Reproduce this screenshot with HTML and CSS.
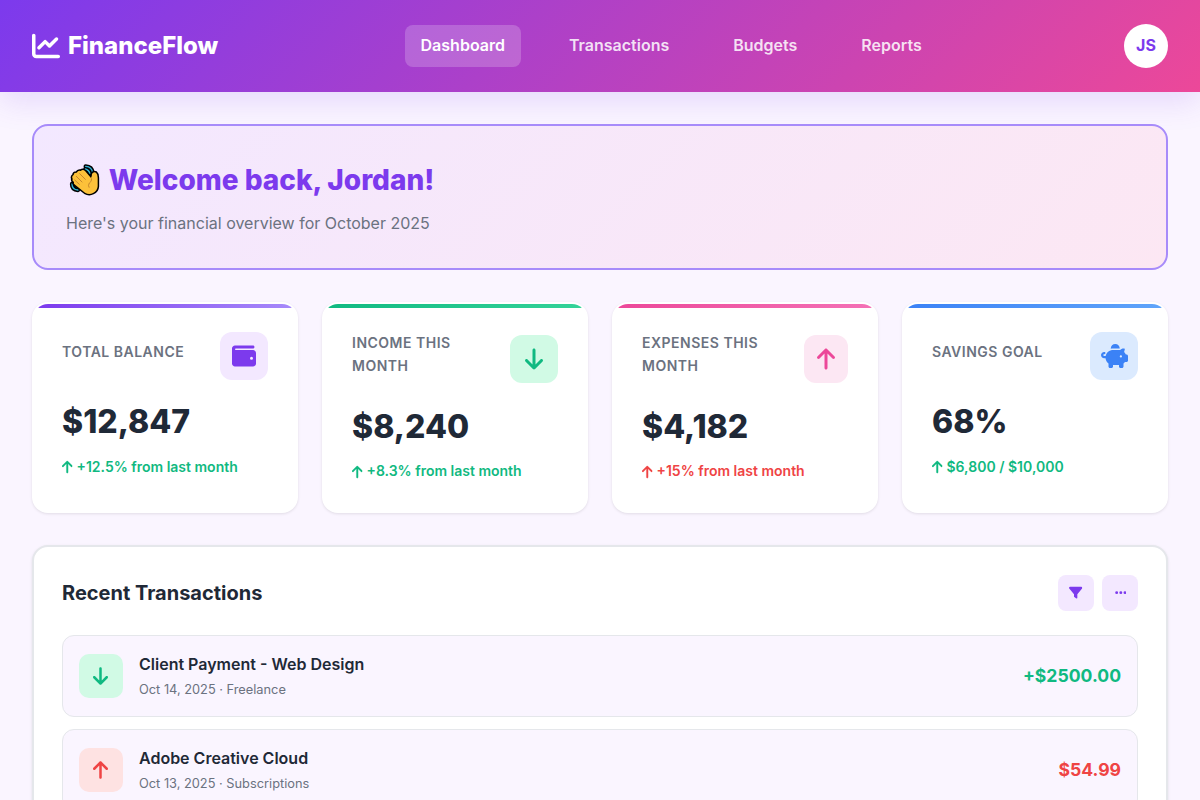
FILE: index.html
```html
<!DOCTYPE html>
<html lang="en">
<head>
<meta charset="utf-8">
<title>FinanceFlow</title>
<link rel="stylesheet" href="styles.css">
</head>
<body>
<svg class="sprite" aria-hidden="true">
  <symbol id="chart-line" viewBox="0 0 512 512"><path d="M64 64c0-17.7-14.3-32-32-32S0 46.3 0 64V400c0 44.2 35.8 80 80 80H480c17.7 0 32-14.3 32-32s-14.3-32-32-32H80c-8.8 0-16-7.2-16-16V64zm406.6 86.6c12.5-12.5 12.5-32.8 0-45.3s-32.8-12.5-45.3 0L320 210.7l-57.4-57.4c-12.5-12.5-32.8-12.5-45.3 0l-112 112c-12.5 12.5-12.5 32.8 0 45.3s32.8 12.5 45.3 0L240 221.3l57.4 57.4c12.5 12.5 32.8 12.5 45.3 0l128-128z"/></symbol>
  <symbol id="wallet" viewBox="0 0 512 512"><path d="M64 32C28.7 32 0 60.7 0 96V416c0 35.3 28.7 64 64 64H448c35.3 0 64-28.7 64-64V192c0-35.3-28.7-64-64-64H80c-8.8 0-16-7.2-16-16s7.2-16 16-16H448c17.7 0 32-14.3 32-32s-14.3-32-32-32H64zM416 272a32 32 0 1 1 0 64 32 32 0 1 1 0-64z"/></symbol>
  <symbol id="arrow-up" viewBox="0 0 384 512"><path d="M214.6 41.4c-12.5-12.5-32.8-12.5-45.3 0l-160 160c-12.5 12.5-12.5 32.8 0 45.3s32.8 12.5 45.3 0L160 141.2V448c0 17.7 14.3 32 32 32s32-14.3 32-32V141.2L329.4 246.6c12.5 12.5 32.8 12.5 45.3 0s12.5-32.8 0-45.3l-160-160z"/></symbol>
  <symbol id="arrow-down" viewBox="0 0 384 512"><path d="M169.4 470.6c12.5 12.5 32.8 12.5 45.3 0l160-160c12.5-12.5 12.5-32.8 0-45.3s-32.8-12.5-45.3 0L224 370.8V64c0-17.7-14.3-32-32-32s-32 14.3-32 32V370.8L54.6 265.4c-12.5-12.5-32.8-12.5-45.3 0s-12.5 32.8 0 45.3l160 160z"/></symbol>
  <symbol id="piggy-bank" viewBox="0 0 576 512"><path d="M400 96l0 .7c-5.3-.4-10.6-.7-16-.7H256c-16.5 0-32.5 2.1-47.8 6c-.1-2-.2-4-.2-6c0-53 43-96 96-96s96 43 96 96zm-16 32c3.5 0 7 .1 10.4 .3c4.2 .3 8.4 .7 12.6 1.3C424.6 109.1 450.8 96 480 96h11.5c10.4 0 18 9.8 15.5 19.9l-13.8 55.2c15.8 14.8 28.7 32.8 37.5 52.9H544c17.7 0 32 14.3 32 32v96c0 17.7-14.3 32-32 32H512c-9.1 12.1-19.9 22.9-32 32v64c0 17.7-14.3 32-32 32H416c-17.7 0-32-14.3-32-32V448H256v32c0 17.7-14.3 32-32 32H192c-17.7 0-32-14.3-32-32V416c-34.9-26.2-58.7-66.3-63.2-112H68c-37.6 0-68-30.4-68-68s30.4-68 68-68h4c13.3 0 24 10.7 24 24s-10.7 24-24 24H68c-11 0-20 9-20 20s9 20 20 20H99.2c12.1-59.8 57.7-107.5 116.3-122.8c12.9-3.4 26.5-5.2 40.5-5.2H384zm64 136a24 24 0 1 0 -48 0 24 24 0 1 0 48 0z"/></symbol>
  <symbol id="filter" viewBox="0 0 512 512"><path d="M3.9 54.9C10.5 40.9 24.5 32 40 32H472c15.5 0 29.5 8.9 36.1 22.9s4.6 30.5-5.2 42.5L320 320.9V448c0 12.1-6.8 23.2-17.7 28.6s-23.8 4.3-33.5-3l-64-48c-8.1-6-12.8-15.5-12.8-25.6V320.9L9 97.3C-.7 85.4-2.8 68.8 3.9 54.9z"/></symbol>
  <symbol id="ellipsis" viewBox="0 0 448 512"><path d="M8 256a56 56 0 1 1 112 0A56 56 0 1 1 8 256zm160 0a56 56 0 1 1 112 0 56 56 0 1 1-112 0zm216-56a56 56 0 1 1 0 112 56 56 0 1 1 0-112z"/></symbol>
</svg>

<header class="header">
  <div class="logo"><svg class="icon logo-icon"><use href="#chart-line"/></svg><span>FinanceFlow</span></div>
  <nav class="nav">
    <a class="nav-link active">Dashboard</a>
    <a class="nav-link">Transactions</a>
    <a class="nav-link">Budgets</a>
    <a class="nav-link">Reports</a>
  </nav>
  <div class="avatar">JS</div>
</header>

<main class="main">
  <section class="welcome">
    <h1><svg class="wave" viewBox="15 13 96 96" role="img" aria-label="Waving hand">
      <g fill="none" stroke-linecap="round">
        <path d="M65 20Q84 21 86 40M64 28Q75 31 78 42M24 73Q24 90 42 91M33 74Q35 82 43 83" stroke="#000" stroke-width="13"/>
        <path d="M65 20Q84 21 86 40M64 28Q75 31 78 42M24 73Q24 90 42 91M33 74Q35 82 43 83" stroke="#2fb4d6" stroke-width="4"/>
      </g>
      <path d="M30 67Q23 63 26 57Q22 51 29 46Q29 38 38 39Q43 31 50 34Q57 28 63 34L81 55Q84 50 84 43Q88 35 96 39Q101 43 101 54V80Q100 94 87 100Q75 106 63 99L35 77Q27 72 30 67Z" fill="#fcc13a" stroke="#000" stroke-width="9" stroke-linejoin="round" paint-order="stroke"/>
      <path d="M47 42L64 59M37 50L54 67M32 61L46 74M83 57Q83 67 76 70Q71 77 75 83" fill="none" stroke="#b9792a" stroke-width="2.4" stroke-linecap="round"/>
    </svg> Welcome back, Jordan!</h1>
    <p>Here's your financial overview for October 2025</p>
  </section>

  <section class="stats">
    <article class="card balance">
      <div class="card-head">
        <div class="label">Total Balance</div>
        <div class="card-icon"><svg class="icon"><use href="#wallet"/></svg></div>
      </div>
      <div class="value">$12,847</div>
      <div class="trend"><svg class="icon narrow"><use href="#arrow-up"/></svg>+12.5% from last month</div>
    </article>
    <article class="card income">
      <div class="card-head">
        <div class="label">Income This Month</div>
        <div class="card-icon"><svg class="icon narrow"><use href="#arrow-down"/></svg></div>
      </div>
      <div class="value">$8,240</div>
      <div class="trend"><svg class="icon narrow"><use href="#arrow-up"/></svg>+8.3% from last month</div>
    </article>
    <article class="card expenses">
      <div class="card-head">
        <div class="label">Expenses This Month</div>
        <div class="card-icon"><svg class="icon narrow"><use href="#arrow-up"/></svg></div>
      </div>
      <div class="value">$4,182</div>
      <div class="trend negative"><svg class="icon narrow"><use href="#arrow-up"/></svg>+15% from last month</div>
    </article>
    <article class="card savings">
      <div class="card-head">
        <div class="label">Savings Goal</div>
        <div class="card-icon"><svg class="icon wide"><use href="#piggy-bank"/></svg></div>
      </div>
      <div class="value">68%</div>
      <div class="trend"><svg class="icon narrow"><use href="#arrow-up"/></svg>$6,800 / $10,000</div>
    </article>
  </section>

  <section class="panel">
    <div class="panel-head">
      <h2>Recent Transactions</h2>
      <div class="actions">
        <button class="action"><svg class="icon"><use href="#filter"/></svg></button>
        <button class="action"><svg class="icon dots"><use href="#ellipsis"/></svg></button>
      </div>
    </div>
    <div class="list">
      <div class="row">
        <div class="row-icon in"><svg class="icon narrow"><use href="#arrow-down"/></svg></div>
        <div class="row-info">
          <div class="row-title">Client Payment - Web Design</div>
          <div class="row-meta">Oct 14, 2025 · Freelance</div>
        </div>
        <div class="amount plus">+$2500.00</div>
      </div>
      <div class="row">
        <div class="row-icon out"><svg class="icon narrow"><use href="#arrow-up"/></svg></div>
        <div class="row-info">
          <div class="row-title">Adobe Creative Cloud</div>
          <div class="row-meta">Oct 13, 2025 · Subscriptions</div>
        </div>
        <div class="amount minus">$54.99</div>
      </div>
    </div>
  </section>
</main>
</body>
</html>
```
FILE: styles.css
```css
* { margin: 0; padding: 0; box-sizing: border-box; }

html { overflow: hidden; height: 100%; }

body {
  height: 100%;
  overflow: hidden;
  font-family: Inter, "Liberation Sans", sans-serif;
  background: #faf5ff;
  color: #1f2937;
  line-height: 1.6;
}

.sprite { display: none; }

.icon { width: 1em; height: 1em; fill: currentColor; flex: none; display: block; }
.icon.narrow { width: 0.75em; }
.icon.wide { width: 1.125em; }
.icon.dots { width: 0.875em; margin-left: 1px; }

.header {
  display: flex;
  align-items: center;
  justify-content: space-between;
  padding: 24px 32px;
  background: linear-gradient(135deg, #7c3aed 0%, #ec4899 100%);
  box-shadow: 0 10px 30px rgba(124, 58, 237, 0.15);
}

.logo {
  display: flex;
  align-items: center;
  gap: 8px;
  color: #fff;
  font-size: 24px;
  font-weight: 800;
  line-height: 38.4px;
}
.logo-icon { margin-bottom: 1px; font-size: 28px; }

.nav { display: flex; gap: 32px; }
.nav-link {
  padding: 8px 16px;
  border-radius: 8px;
  color: rgba(255, 255, 255, 0.85);
  font-weight: 600;
}
.nav-link.active { background: rgba(255, 255, 255, 0.2); color: #fff; }

.avatar {
  display: flex;
  align-items: center;
  justify-content: center;
  width: 44px;
  height: 44px;
  border-radius: 50%;
  background: #fff;
  color: #7c3aed;
  font-weight: 700;
}

.main { padding: 32px; }

.welcome {
  margin-bottom: 32px;
  padding: 32px;
  border: 2px solid #a78bfa;
  border-radius: 16px;
  background: linear-gradient(135deg, #f3e8ff 0%, #fce7f3 100%);
}
.welcome h1 {
  height: 44.8px;
  margin-bottom: 8px;
  color: #7c3aed;
  font-size: 28px;
  font-weight: 800;
  line-height: 44.8px;
}
.wave { width: 32px; height: 32px; margin: 0 1.6px 0 3px; vertical-align: -6px; }
.welcome p { color: #6b7280; font-size: 16px; }

.stats {
  display: grid;
  grid-template-columns: repeat(4, 1fr);
  gap: 24px;
  margin-bottom: 32px;
}

.card {
  position: relative;
  overflow: hidden;
  padding: 28px;
  border: 2px solid transparent;
  border-radius: 16px;
  background: #fff;
  box-shadow: 0 1px 3px rgba(0, 0, 0, 0.1);
}
.card::before {
  content: "";
  position: absolute;
  top: 0;
  left: 0;
  right: 0;
  height: 4px;
  background: var(--bar);
}
.balance { --bar: linear-gradient(90deg, #7c3aed, #a78bfa); --tint: #f3e8ff; --tone: #7c3aed; }
.income { --bar: linear-gradient(90deg, #10b981, #34d399); --tint: #d1fae5; --tone: #10b981; }
.expenses { --bar: linear-gradient(90deg, #ec4899, #f472b6); --tint: #fce7f3; --tone: #ec4899; }
.savings { --bar: linear-gradient(90deg, #3b82f6, #60a5fa); --tint: #dbeafe; --tone: #3b82f6; }

.card-head {
  display: flex;
  align-items: center;
  justify-content: space-between;
  margin-bottom: 16px;
}
.label {
  margin-bottom: 8px;
  color: #6b7280;
  font-size: 14px;
  font-weight: 600;
  letter-spacing: 0.5px;
  text-transform: uppercase;
}
.card-icon {
  display: flex;
  align-items: center;
  justify-content: center;
  width: 48px;
  height: 48px;
  border-radius: 12px;
  background: var(--tint);
  color: var(--tone);
  font-size: 24px;
}
.value { margin-bottom: 8px; font-size: 32px; font-weight: 800; }
.trend {
  display: flex;
  align-items: center;
  gap: 4px;
  color: #10b981;
  font-size: 14px;
  font-weight: 600;
}
.trend .icon { stroke: currentColor; stroke-width: 8px; }
.trend.negative { color: #ef4444; }

.panel {
  padding: 28px;
  border: 2px solid #e5e7eb;
  border-radius: 16px;
  background: #fff;
  box-shadow: 0 1px 3px rgba(0, 0, 0, 0.1);
}
.panel-head {
  display: flex;
  align-items: center;
  justify-content: space-between;
  margin-bottom: 24px;
}
.panel-head h2 { font-size: 20px; font-weight: 700; }
.actions { display: flex; gap: 8px; }
.action {
  display: flex;
  align-items: center;
  justify-content: center;
  width: 36px;
  height: 36px;
  padding-bottom: 1px;
  border: none;
  border-radius: 8px;
  background: #f3e8ff;
  color: #7c3aed;
  font-size: 13.333px;
}

.list { display: flex; flex-direction: column; gap: 12px; }
.row {
  display: flex;
  align-items: center;
  gap: 16px;
  padding: 16px;
  border: 1px solid #e5e7eb;
  border-radius: 12px;
  background: #faf5ff;
}
.row-icon {
  display: flex;
  align-items: center;
  justify-content: center;
  width: 44px;
  height: 44px;
  padding-right: 1px;
  border-radius: 10px;
  font-size: 20px;
}
.row-icon.in { background: #d1fae5; color: #10b981; }
.row-icon.out { background: #fee2e2; color: #ef4444; }
.row-info { flex: 1; margin-bottom: -0.6px; }
.row-title { margin-bottom: 2.7px; font-size: 16px; font-weight: 600; }
.row-meta { color: #6b7280; font-size: 12.8px; }
.amount { font-size: 17.6px; font-weight: 700; }
.amount.plus { color: #10b981; }
.amount.minus { color: #ef4444; }
```
